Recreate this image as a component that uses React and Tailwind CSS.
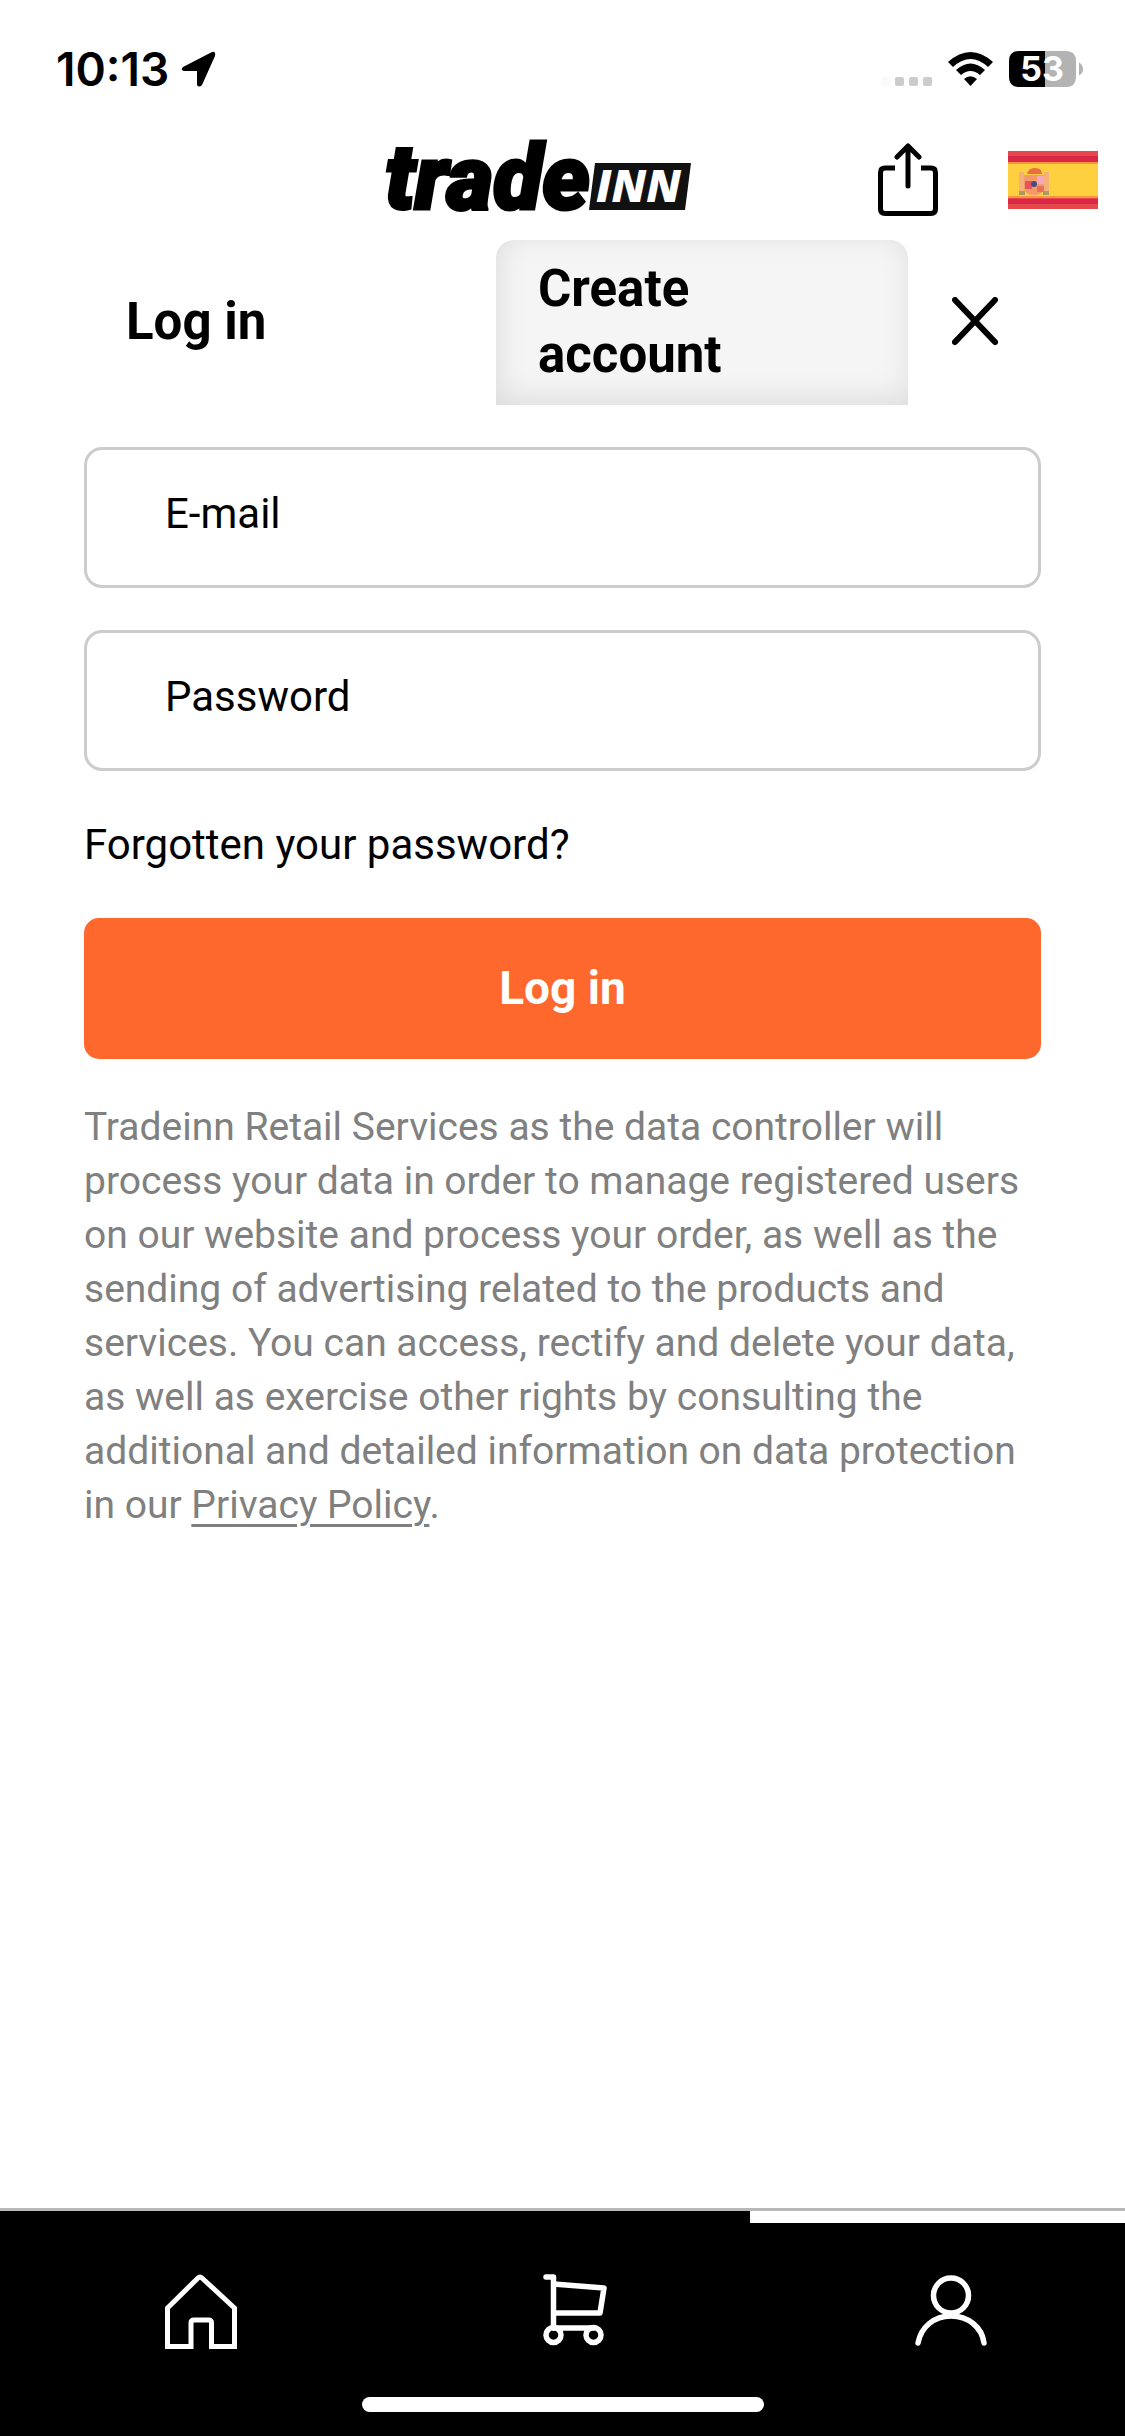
import React, { useState } from "react";

const LocationIcon = () => (
  <svg viewBox="0 0 35 36" className="h-9 w-[35px]" aria-hidden="true">
    <path d="M2 16 31 1q4-1 3 4L21 34q-3 3-5 0V20H3q-4-1-1-4Z" />
  </svg>
);

const WifiIcon = () => (
  <svg viewBox="0 0 45 34" className="h-[34px] w-[45px]" aria-hidden="true">
    <path d="M0 10Q22.500-10 45 10L40 15Q22.500-1 5 15Z" />
    <path d="M8 18Q22.500 5 37 18L32 23Q22.500 15 13 23Z" />
    <path d="M16 27Q22.500 21.500 29 27L22.500 34Z" />
  </svg>
);

const BatteryIcon = () => (
  <svg
    viewBox="0 0 74 36"
    className="h-9 w-[74px] overflow-visible"
    role="img"
    aria-label="Battery 53%"
  >
    <path d="M10 0H36V36H10Q0 36 0 26V10Q0 0 10 0Z" />
    <path d="M36 0H57Q67 0 67 10V26Q67 36 57 36H36Z" fill="#b3b3b3" />
    <path d="M70 11.500Q74 14 74 18T70 24.500Z" fill="#b3b3b3" />
    <text
      x="33"
      y="30"
      textAnchor="middle"
      fill="white"
      className="font-['Inter',sans-serif] text-[34px] font-bold"
    >
      53
    </text>
  </svg>
);

const Logo = () => (
  <svg
    viewBox="0 0 306 76"
    className="h-[76px] w-[306px] overflow-visible"
    role="img"
    aria-label="tradeinn"
  >
    <text
      x="-1"
      y="71"
      stroke="black"
      strokeWidth="3"
      className="font-['Roboto',sans-serif] text-[90px] font-black italic"
    >
      trade
    </text>
    <path d="M209 25H305L299 72H203Z" fill="#111" />
    <text
      x="210"
      y="64"
      fill="white"
      className="font-['Open_Sans',sans-serif] text-[44px] font-extrabold italic"
    >
      INN
    </text>
  </svg>
);

const ShareIcon = () => (
  <svg
    viewBox="0 0 60 73"
    className="h-[73px] w-[60px]"
    fill="none"
    stroke="black"
    strokeWidth="5"
    aria-hidden="true"
  >
    <path d="M17 25H7Q2.500 25 2.500 29.500V66Q2.500 70.500 7 70.500H53Q57.500 70.500 57.500 66V29.500Q57.500 25 53 25H43" />
    <path d="M30 43V3M19 14 30 3 41 14" strokeLinecap="round" strokeLinejoin="round" />
  </svg>
);

const SpainFlag = () => (
  <svg viewBox="0 0 90 58" className="h-[58px] w-[90px]" role="img" aria-label="Spain">
    <rect width="90" height="58" fill="#e5484d" />
    <rect y="5" width="90" height="6" fill="#dc2646" />
    <rect y="48" width="90" height="5" fill="#dc2646" />
    <rect y="11" width="90" height="36" fill="#f9963f" />
    <rect y="13" width="90" height="32" fill="#fed03f" />
    <rect x="11" y="21" width="5" height="20" fill="#f6b07a" />
    <rect x="36" y="21" width="5" height="20" fill="#f6b07a" />
    <path d="M19 23Q20 17 27 17T34 23Z" fill="#ef6b45" />
    <path d="M16 24H36V38Q34 44 26 44T16 38Z" fill="#f29a6c" />
    <rect x="17" y="30" width="7" height="8" fill="#e8545a" />
    <rect x="29" y="25" width="7" height="8" fill="#f0a9b8" />
    <rect x="29" y="35" width="7" height="6" fill="#e8705a" />
    <circle cx="26" cy="33" r="3" fill="#4b4a80" />
    <rect x="11" y="40" width="6" height="4" fill="#a99a60" />
    <rect x="35" y="40" width="6" height="4" fill="#a99a60" />
  </svg>
);

const CloseIcon = () => (
  <svg
    viewBox="0 0 46 51"
    className="h-[51px] w-[46px]"
    stroke="black"
    strokeWidth="6"
    strokeLinecap="round"
    aria-hidden="true"
  >
    <path d="M3 3 43 45M43 3 3 45" />
  </svg>
);

const HomeIcon = () => (
  <svg
    viewBox="0 0 72 75"
    className="h-[75px] w-[72px]"
    fill="none"
    stroke="white"
    strokeWidth="5"
    aria-hidden="true"
  >
    <path d="M33 4 2.500 34V72.500H26V49Q26 46 29 46H43.500Q46.500 46 46.500 49V72.500H69.500V34L37 4Q35 2 33 4Z" />
  </svg>
);

const CartIcon = () => (
  <svg
    viewBox="0 0 66 74"
    className="h-[74px] w-[66px]"
    fill="none"
    stroke="white"
    strokeWidth="5.500"
    strokeLinecap="round"
    strokeLinejoin="round"
    aria-hidden="true"
  >
    <path d="M3 3H10.500V54M10.500 10 61 14 57 39H10.500" />
    <path d="M10.500 54H51" />
    <circle cx="10.500" cy="61" r="7.500" />
    <circle cx="50.500" cy="61" r="7.500" />
  </svg>
);

const UserIcon = () => (
  <svg
    viewBox="0 0 72 72"
    className="h-[72px] w-[72px]"
    fill="none"
    stroke="white"
    strokeWidth="5.500"
    strokeLinecap="round"
    aria-hidden="true"
  >
    <circle cx="36" cy="20.500" r="17.500" />
    <path d="M3 68C6 52 19 41 36 41S67 52 69 68" />
  </svg>
);

const navItems = [
  { name: "Home", Icon: HomeIcon },
  { name: "Cart", Icon: CartIcon },
  { name: "Account", Icon: UserIcon },
];

const App = () => {
  const [email, setEmail] = useState("");
  const [password, setPassword] = useState("");

  return (
    <div className="flex min-h-screen flex-col bg-white font-['Roboto',sans-serif] text-black">
      {/* Status bar */}
      <div className="flex h-[138px] items-center justify-between pr-[42px] pl-14">
        <div className="flex items-center gap-3">
          <span className="font-['Inter',sans-serif] text-[46px] font-semibold">
            10:13
          </span>
          <LocationIcon />
        </div>
        <div className="flex items-center gap-4">
          <div className="flex gap-[5px] pt-6">
            <span className="size-[9px] rounded-xs bg-[#fafafa]" />
            <span className="size-[9px] rounded-xs bg-[#ccc]" />
            <span className="size-[9px] rounded-xs bg-[#ccc]" />
            <span className="size-[9px] rounded-xs bg-[#ccc]" />
          </div>
          <WifiIcon />
          <BatteryIcon />
        </div>
      </div>

      {/* Header */}
      <header className="flex h-[102px] items-start justify-end pr-[27px]">
        <a href="#home" className="mr-[186px]">
          <Logo />
        </a>
        <button type="button" aria-label="Share" className="mt-[5px] mr-[70px]">
          <ShareIcon />
        </button>
        <button type="button" aria-label="Country" className="mt-[13px]">
          <SpainFlag />
        </button>
      </header>

      <main className="flex-1 px-[84px]">
        {/* Tabs */}
        <div className="flex">
          <div role="tablist" className="grid flex-1 grid-cols-2 text-[51px] leading-[66px] font-bold">
            <button
              type="button"
              role="tab"
              aria-selected="true"
              className="px-[42px] pt-4 pb-[17px] text-left"
            >
              Log in
            </button>
            <button
              type="button"
              role="tab"
              aria-selected="false"
              className="rounded-t-[18px] bg-[#f5f5f5] px-[42px] pt-4 pb-[17px] text-left shadow-[inset_3px_-6px_30px_rgba(0,0,0,0.1)]"
            >
              Create account
            </button>
          </div>
          <button
            type="button"
            aria-label="Close"
            className="flex w-[133px] items-center justify-center"
          >
            <CloseIcon />
          </button>
        </div>

        <form className="mt-[42px] flex flex-col" onSubmit={(e) => e.preventDefault()}>
          <input
            type="email"
            aria-label="E-mail"
            placeholder="E-mail"
            value={email}
            onChange={(e) => setEmail(e.target.value)}
            className="h-[141px] rounded-[18px] border-3 border-[#ccc] px-[78px] pb-2 text-[42px] placeholder:text-black"
          />
          <input
            type="password"
            aria-label="Password"
            placeholder="Password"
            value={password}
            onChange={(e) => setPassword(e.target.value)}
            className="mt-[42px] h-[141px] rounded-[18px] border-3 border-[#ccc] px-[78px] pb-2 text-[42px] placeholder:text-black"
          />
          <a href="#forgotten" className="my-[42px] text-[42px] leading-[63px]">
            Forgotten your password?
          </a>
          <button
            type="submit"
            className="h-[141px] rounded-[15px] bg-[#ff682c] text-[46px] font-bold text-white"
          >
            Log in
          </button>
        </form>

        <p className="mt-[41px] text-[39px] leading-[54px] text-[#808080]">
          Tradeinn Retail Services as the data controller will process your data
          in order to manage registered users on our website and process your
          order, as well as the sending of advertising related to the products
          and services. You can access, rectify and delete your data, as well as
          exercise other rights by consulting the additional and detailed
          information on data protection in our{" "}
          <a href="#privacy" className="underline decoration-3 underline-offset-6">
            Privacy Policy
          </a>
          .
        </p>
      </main>

      {/* Bottom navigation */}
      <nav className="border-t-3 border-[#b8b8b8] bg-black">
        <div className="grid grid-cols-3">
          {navItems.map(({ name, Icon }) => (
            <a
              key={name}
              href={`#${name.toLowerCase()}`}
              aria-label={name}
              className={`flex h-[186px] items-center justify-center border-t-12 pt-0.5 pl-[26px] ${
                name === "Account" ? "border-white" : "border-black"
              }`}
            >
              <Icon />
            </a>
          ))}
        </div>
        <div className="mx-auto mb-6 h-[15px] w-[402px] rounded-full bg-white" />
      </nav>
    </div>
  );
};

export default App;
